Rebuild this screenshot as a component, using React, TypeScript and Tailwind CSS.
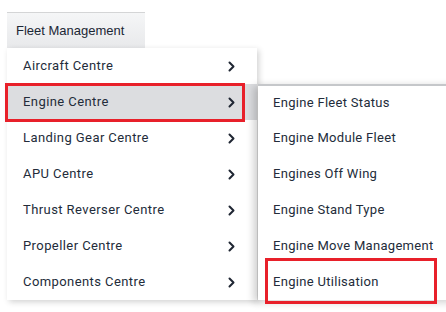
const mainItems = [
  'Aircraft Centre',
  'Engine Centre',
  'Landing Gear Centre',
  'APU Centre',
  'Thrust Reverser Centre',
  'Propeller Centre',
  'Components Centre',
]

const subItems = [
  'Engine Fleet Status',
  'Engine Module Fleet',
  'Engines Off Wing',
  'Engine Stand Type',
  'Engine Move Management',
  'Engine Utilisation',
]

function Chevron() {
  return (
    <svg width="8" height="11" viewBox="0 0 8 11" fill="none">
      <polyline points="1.5,1.5 5.5,5.5 1.5,9.5" stroke="#1f2633" strokeWidth="2" strokeLinecap="round" strokeLinejoin="round" />
    </svg>
  )
}

export default function App() {
  return (
    <div className="w-[446px] h-[312px] bg-white overflow-hidden text-[#232c3a]" style={{ fontFamily: 'Roboto, "Noto Sans", sans-serif' }}>
      <div className="pt-[12px] pl-[7px]">
        <div
          className="w-[138px] h-[36px] flex items-center pl-[9px] border-t border-[#d4d5d6] bg-gradient-to-b from-[#f5f6f7] to-[#e8e9eb] text-[13px] text-[#1b2735]"
          style={{ fontFamily: '"Liberation Sans", Arial, sans-serif' }}
        >
          Fleet Management
        </div>
        <div className="relative">
          <div className="w-[250px] bg-white shadow-[2px_2px_6px_rgba(0,0,0,0.18)]">
            {mainItems.map((label, i) => (
              <div
                key={label}
                className={`h-[36px] flex items-center justify-between pl-[16px] pr-[21px] text-[13px] tracking-[0.42px] ${i === 1 ? 'bg-[#dcdde0]' : ''}`}
              >
                <span>{label}</span>
                <Chevron />
              </div>
            ))}
          </div>
          <div className="absolute left-[-2px] top-[35px] w-[240px] h-[39px] border-[3px] border-[#e8202a]" />
          <div className="absolute left-[251px] top-[36px] w-[200px] bg-white border-t-2 border-[#c5c7ca] shadow-[-4px_2px_8px_rgba(0,0,0,0.2)]">
            {subItems.map((label, i) => (
              <div key={label} className={`${i === 0 ? 'h-[34px]' : 'h-[36px]'} flex items-center pl-[15px] text-[13px] tracking-[0.3px]`}>
                {label}
              </div>
            ))}
          </div>
          <div className="absolute left-[258px] top-[210px] w-[172px] h-[46px] border-[3px] border-[#e8202a]" />
        </div>
      </div>
    </div>
  )
}
